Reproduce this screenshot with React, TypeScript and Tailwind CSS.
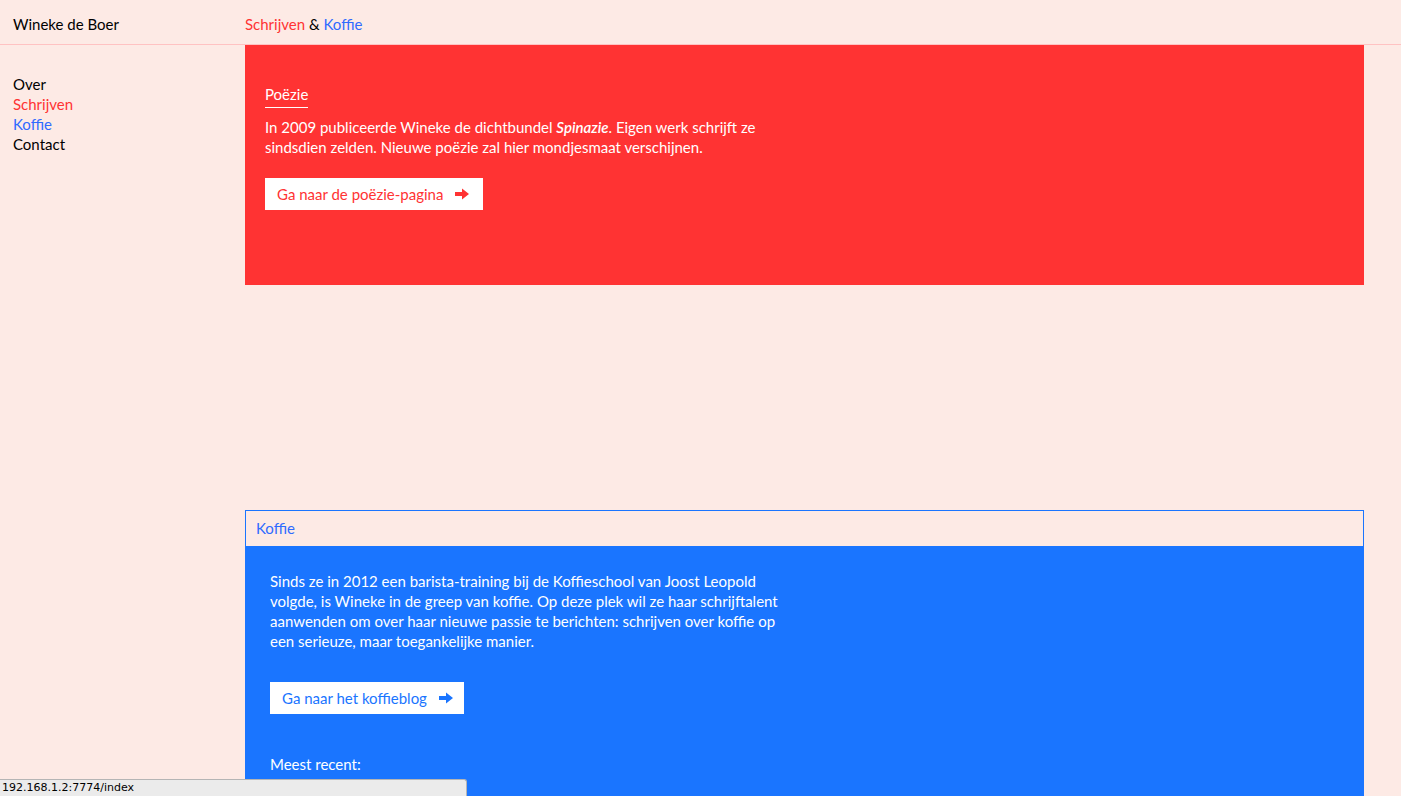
import React from 'react';

const ArrowRight: React.FC<{ className?: string }> = ({ className }) => (
  <svg viewBox="0 0 14 12" className={className} fill="currentColor" aria-hidden>
    <path d="M0 4h7V0.5l7 5.5-7 5.5V8H0z" />
  </svg>
);

export default function App() {
  return (
    <div className="min-h-[796px] bg-[#fdeae5] font-['Lato',sans-serif] text-[15px] text-black">
      <header className="flex h-[45px] items-center border-b border-[#ffc2c2] pt-1">
        <div className="w-[245px] pl-[13px]">Wineke de Boer</div>
        <div>
          <span className="text-[#ff3333]">Schrijven</span> &amp;{' '}
          <span className="text-[#2f6bff]">Koffie</span>
        </div>
      </header>

      <div className="flex">
        <nav className="flex w-[245px] flex-col pl-[13px] pt-[29px] leading-5">
          <a>Over</a>
          <a className="text-[#ff3333]">Schrijven</a>
          <a className="text-[#2f6bff]">Koffie</a>
          <a>Contact</a>
        </nav>

        <main className="mr-[37px] flex-1">
          <section className="h-[240px] bg-[#ff3333] px-5 pt-[38px] text-white">
            <h2 className="inline-block border-b border-white pb-[3px] leading-5">Poëzie</h2>
            <p className="mt-[9px] max-w-[530px] leading-5">
              In 2009 publiceerde Wineke de dichtbundel <em className="font-semibold">Spinazie</em>. Eigen werk schrijft ze
              sindsdien zelden. Nieuwe poëzie zal hier mondjesmaat verschijnen.
            </p>
            <a className="mt-[21px] inline-flex h-8 items-center gap-3 bg-white pl-3 pr-[14px] text-[#ff3333]">
              Ga naar de poëzie-pagina
              <ArrowRight className="h-3 w-[14px]" />
            </a>
          </section>

          <section className="mt-[225px] border border-[#1a75ff]">
            <div className="flex h-[35px] items-center px-[10px] text-[#2f6bff]">Koffie</div>
            <div className="h-[260px] bg-[#1a75ff] px-6 pt-[25px] text-white">
              <p className="max-w-[530px] leading-5">
                Sinds ze in 2012 een barista-training bij de Koffieschool van Joost Leopold volgde, is Wineke in de
                greep van koffie. Op deze plek wil ze haar schrijftalent aanwenden om over haar nieuwe passie te
                berichten: schrijven over koffie op een serieuze, maar toegankelijke manier.
              </p>
              <a className="mt-[31px] inline-flex h-8 items-center gap-3 bg-white pl-3 pr-[11px] text-[#1a75ff]">
                Ga naar het koffieblog
                <ArrowRight className="h-3 w-[14px]" />
              </a>
              <p className="mt-[40px] leading-5">Meest recent:</p>
            </div>
          </section>
        </main>
      </div>

      <div className="fixed bottom-0 left-0 h-[17px] w-[467px] rounded-tr-[3px] border-t border-r border-[#b5b5b5] bg-[#ebebeb] pl-[2px] font-['DejaVu_Sans',sans-serif] text-[11px] leading-[16px] text-black">
        192.168.1.2:7774/index
      </div>
    </div>
  );
}
